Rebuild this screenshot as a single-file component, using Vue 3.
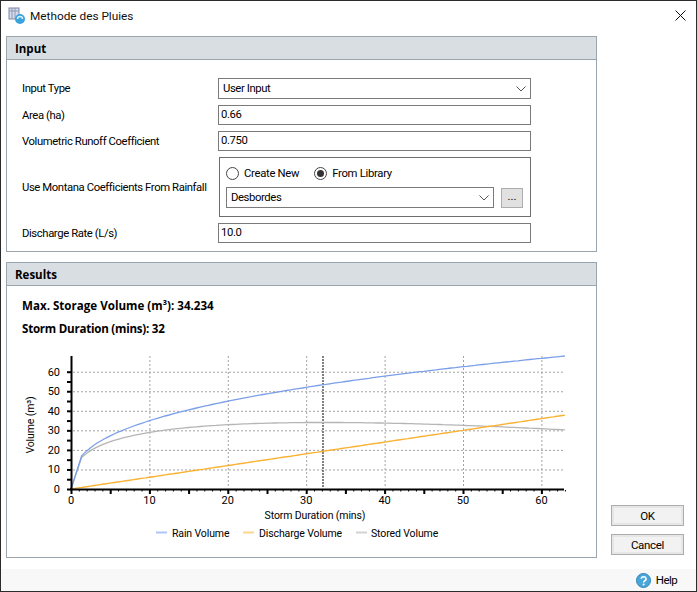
<script setup>
const X = (t) => 71 + t * 7.84
const Y = (v) => 489 - v * 1.955
const rain = (t) => 15.18 * Math.pow(t, 0.362)
const ts = [0, 1.37]
for (let t = 1.5; t <= 63; t += 0.5) ts.push(t)
const val = (fn, t) => (t === 0 ? 0 : fn(t))
const line = (fn) => ts.map((t) => `${X(t).toFixed(1)},${Y(val(fn, t)).toFixed(1)}`).join(' ')
const rainPts = line(rain)
const dischargePts = line((t) => 0.6 * t)
const storedPts = line((t) => rain(t) - 0.6 * t)
const xMajor = [10, 20, 30, 40, 50, 60]
const yMajor = [10, 20, 30, 40, 50, 60]
const xFive = Array.from({ length: 13 }, (_, i) => i * 5)
const yFive = Array.from({ length: 13 }, (_, i) => i * 5)
const xOne = Array.from({ length: 63 }, (_, i) => i + 1)
</script>

<template>
  <div class="window">
    <header class="title">
      <svg class="app-icon" width="18" height="18" viewBox="0 0 18 18">
        <rect x="1" y="1" width="10" height="11" fill="#d5dbe8" stroke="#7d88a6" />
        <path d="M4 1v11M7 1v11M1 4h10" stroke="#8f99b5" fill="none" />
        <circle cx="12" cy="12" r="5" fill="#3aa3dc" />
        <path d="M9.5 12a2.5 2.5 0 0 1 5 0" stroke="#d8f0fb" stroke-width="1.5" fill="none" />
      </svg>
      <span class="title-text">Methode des Pluies</span>
      <svg class="close" width="11" height="11" viewBox="0 0 11 11">
        <path d="M0.5 0.5l10 10M10.5 0.5l-10 10" stroke="#111" fill="none" />
      </svg>
    </header>

    <main class="main">
      <div class="panels">
        <section class="panel input-panel">
          <h2 class="panel-head">Input</h2>
          <div class="form">
            <label>Input Type</label>
            <div class="combo tall">
              <span>User Input</span>
              <svg width="10" height="6" viewBox="0 0 10 6"><path d="M0.5 0.5L5 5l4.5-4.5" stroke="#555" fill="none" /></svg>
            </div>
            <label>Area (ha)</label>
            <div class="field">0.66</div>
            <label>Volumetric Runoff Coefficient</label>
            <div class="field">0.750</div>
            <label>Use Montana Coefficients From Rainfall</label>
            <div class="group">
              <div class="radios">
                <span class="radio"><i class="dot"></i>Create New</span>
                <span class="radio"><i class="dot on"></i>From Library</span>
              </div>
              <div class="lib-row">
                <div class="combo lib">
                  <span>Desbordes</span>
                  <svg width="10" height="6" viewBox="0 0 10 6"><path d="M0.5 0.5L5 5l4.5-4.5" stroke="#555" fill="none" /></svg>
                </div>
                <button class="more">...</button>
              </div>
            </div>
            <label>Discharge Rate (L/s)</label>
            <div class="field">10.0</div>
          </div>
        </section>

        <section class="panel results-panel">
          <h2 class="panel-head">Results</h2>
          <div class="results">
            <p class="stat">Max. Storage Volume (m³): 34.234</p>
            <p class="stat">Storm Duration (mins): 32</p>
            <svg class="chart" width="589" height="205" viewBox="7 345 589 205">
              <g stroke="#a3a3a3" stroke-dasharray="2 2" fill="none">
                <line v-for="v in yMajor" :key="'gy' + v" x1="73" :x2="564" :y1="Y(v) + 0.5" :y2="Y(v) + 0.5" />
                <line v-for="t in xMajor" :key="'gx' + t" :x1="X(t) + 0.5" :x2="X(t) + 0.5" y1="356" y2="488" />
              </g>
              <line x1="323" x2="323" y1="356" y2="488" stroke="#808080" stroke-width="2" stroke-dasharray="2 1" />

              <polyline :points="storedPts" fill="none" stroke="#b5b5b5" stroke-width="1.3" />
              <polyline :points="rainPts" fill="none" stroke="#7b9fe8" stroke-width="1.3" />
              <polyline :points="dischargePts" fill="none" stroke="#f9b233" stroke-width="1.4" />

              <g stroke="#000" fill="none">
                <line x1="71.5" x2="71.5" y1="356" y2="490" stroke-width="2" />
                <line x1="70" x2="564" y1="489.5" y2="489.5" stroke-width="2" />
                <line v-for="v in yFive" :key="'ty' + v" x1="67" x2="71" :y1="Y(v) + 0.5" :y2="Y(v) + 0.5" stroke-width="2" />
                <line v-for="t in xFive" :key="'tx' + t" :x1="X(t) + 0.5" :x2="X(t) + 0.5" y1="490" y2="494" stroke-width="2" />
                <line v-for="t in xOne" :key="'to' + t" :x1="X(t) + 0.5" :x2="X(t) + 0.5" y1="490" y2="491.5" />
              </g>

              <g class="tick">
                <text v-for="v in yMajor" :key="'ly' + v" x="60" :y="Y(v) + 4" text-anchor="end">{{ v }}</text>
                <text x="60" y="493" text-anchor="end">0</text>
                <text x="71" y="504" text-anchor="middle">0</text>
                <text v-for="t in xMajor" :key="'lx' + t" :x="X(t)" y="504" text-anchor="middle">{{ t }}</text>
              </g>
              <g class="axis-text">
                <text x="315" y="519" text-anchor="middle">Storm Duration (mins)</text>
                <text transform="translate(34 425) rotate(-90)" text-anchor="middle">Volume (m³)</text>
                <line x1="156" x2="167" y1="532.5" y2="532.5" stroke="#aec6f4" stroke-width="2" />
                <text x="172" y="537">Rain Volume</text>
                <line x1="243" x2="254" y1="532.5" y2="532.5" stroke="#fcd48a" stroke-width="2" />
                <text x="259" y="537">Discharge Volume</text>
                <line x1="356" x2="367" y1="532.5" y2="532.5" stroke="#d2d2d2" stroke-width="2" />
                <text x="371" y="537">Stored Volume</text>
              </g>
            </svg>
          </div>
        </section>
      </div>

      <aside class="actions">
        <button class="action">OK</button>
        <button class="action">Cancel</button>
      </aside>
    </main>

    <footer class="footer">
      <svg width="15" height="15" viewBox="0 0 15 15">
        <circle cx="7.5" cy="7.5" r="7" fill="#4aa6d8" stroke="#2f86b8" />
        <path d="M5.2 5.8a2.4 2.2 0 1 1 3.4 2.1c-.8.4-1 .9-1 1.5" fill="none" stroke="#fff" stroke-width="1.6" />
        <circle cx="7.6" cy="11.5" r="1" fill="#fff" />
      </svg>
      <span>Help</span>
    </footer>
  </div>
</template>

<style>
html, body { margin: 0; background: #fff; }
</style>

<style scoped>
.window {
  width: 697px;
  height: 592px;
  box-sizing: border-box;
  border: 1px solid #2b2b2b;
  background: #fff;
  display: flex;
  flex-direction: column;
  font-family: Roboto, "Noto Sans", sans-serif;
  font-size: 11.3px;
  letter-spacing: -0.4px;
  color: #000;
  overflow: hidden;
}
.title {
  height: 35px;
  flex: none;
  display: flex;
  align-items: center;
  padding: 0 10px 6px 7px;
  box-sizing: border-box;
}
.title-text { margin-left: 4px; font-size: 11.8px; letter-spacing: 0; color: #111; }
.close { margin-left: auto; }
.main { flex: 1; display: flex; min-height: 0; }
.panels {
  width: 591px;
  margin-left: 5px;
  display: flex;
  flex-direction: column;
  gap: 10px;
}
.panel { border: 1px solid #9aa5ad; box-sizing: border-box; }
.input-panel { height: 216px; }
.results-panel { height: 296px; }
.panel-head {
  margin: 0;
  height: 23px;
  line-height: 23px;
  box-sizing: border-box;
  background: #d9dee2;
  border-bottom: 1px solid #9aa5ad;
  padding-left: 8px;
  font-family: "Open Sans", sans-serif;
  font-size: 11.5px;
  font-weight: 700;
  letter-spacing: 0;
}
.form {
  display: grid;
  grid-template-columns: 196px 313px;
  row-gap: 6px;
  align-items: center;
  padding: 18px 0 0 15px;
}
.form label { white-space: nowrap; }
.field, .combo {
  border: 1px solid #7a7a7a;
  box-sizing: border-box;
  height: 20px;
  line-height: 18px;
  padding-left: 2px;
  background: #fff;
  white-space: nowrap;
}
.combo {
  display: flex;
  align-items: center;
  justify-content: space-between;
  padding: 0 4px;
}
.tall { height: 21px; }
.group {
  margin-left: 1px;
  height: 60px;
  border: 1px solid #6e6e6e;
  box-sizing: border-box;
  padding: 8px 7px 0 6px;
}
.radios { display: flex; gap: 15px; height: 14px; align-items: center; }
.radio { display: flex; align-items: center; gap: 5px; letter-spacing: -0.3px; }
.dot {
  width: 13px;
  height: 13px;
  border: 1px solid #444;
  border-radius: 50%;
  box-sizing: border-box;
  display: flex;
  align-items: center;
  justify-content: center;
}
.dot.on::after {
  content: "";
  width: 7px;
  height: 7px;
  border-radius: 50%;
  background: #333;
}
.lib-row { display: flex; align-items: flex-start; gap: 7px; margin-top: 7px; }
.lib { width: 268px; height: 21px; }
.more {
  width: 22px;
  height: 20px;
  margin-top: 1px;
  padding: 0 0 3px;
  border: 1px solid #adadad;
  background: #e1e1e1;
  font: inherit;
  line-height: 1;
  color: #000;
}
.results { padding: 11px 0 0; }
.stat {
  margin: 0 0 5px 15px;
  height: 18px;
  line-height: 18px;
  font-family: "Open Sans", sans-serif;
  font-size: 11.6px;
  font-weight: 700;
  letter-spacing: 0;
}
.stat + .stat { margin-bottom: 7px; letter-spacing: -0.25px; }
.chart { display: block; }
.tick { font-size: 11px; fill: #000; letter-spacing: 0; }
.axis-text { font-size: 10.5px; fill: #000; letter-spacing: -0.12px; }
.actions {
  width: 73px;
  margin-left: 14px;
  padding-bottom: 14px;
  box-sizing: border-box;
  display: flex;
  flex-direction: column;
  justify-content: flex-end;
  gap: 8px;
}
.action {
  height: 21px;
  width: 73px;
  padding: 0;
  border: 1px solid #adadad;
  outline: 2px solid #e6e6e6;
  outline-offset: -3px;
  background: #f2f2f2;
  font: inherit;
  font-size: 11.5px;
  letter-spacing: -0.3px;
  color: #000;
}
.footer {
  height: 22px;
  flex: none;
  background: #f8f8f8;
  display: flex;
  align-items: center;
  justify-content: flex-end;
  gap: 5px;
  padding-right: 19px;
  font-size: 11.5px;
  letter-spacing: -0.6px;
}
</style>
